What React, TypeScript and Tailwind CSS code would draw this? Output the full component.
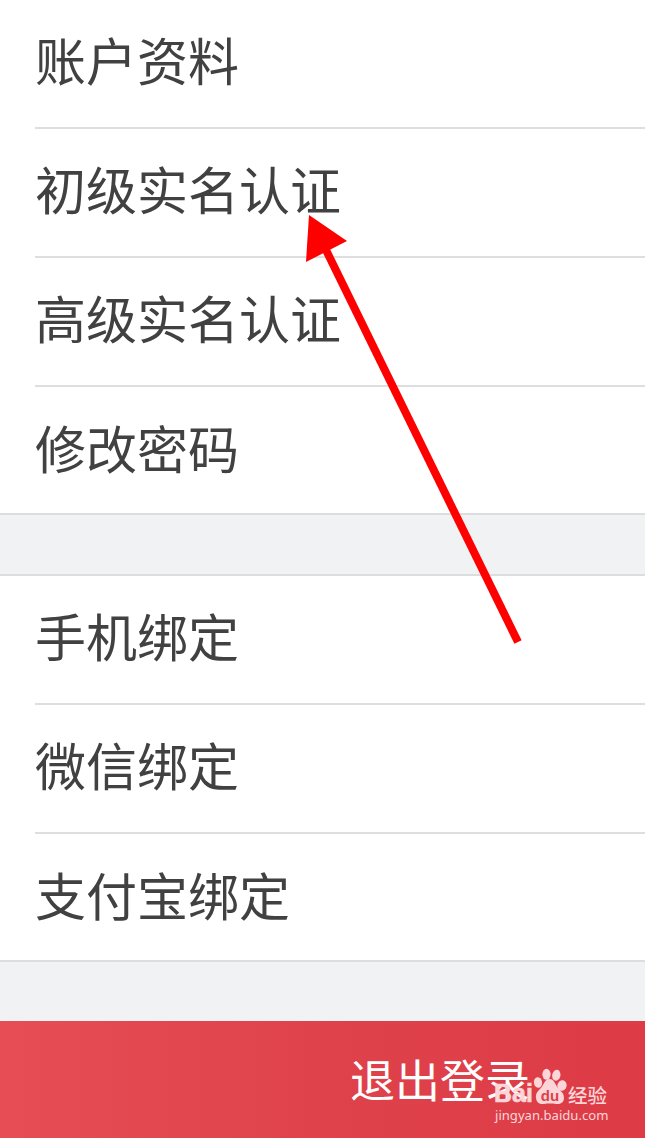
const accountItems = ["账户资料", "初级实名认证", "高级实名认证", "修改密码"];
const bindingItems = ["手机绑定", "微信绑定", "支付宝绑定"];

function MenuGroup({ items }: { items: string[] }) {
  return (
    <ul className="flex flex-col bg-white pl-[35px] border-b-2 border-[#dcdddf]">
      {items.map((item, i) => (
        <li
          key={item}
          className={`flex items-center text-[51px] leading-none text-[#414141] ${
            i < items.length - 1 ? "h-[129px] pb-2 border-b-2 border-[#dedede]" : "h-[126px] pb-[6px]"
          }`}
        >
          {item}
        </li>
      ))}
    </ul>
  );
}

// Red pointer drawn over the list
function Arrow() {
  return (
    <svg className="absolute inset-0 pointer-events-none" width="645" height="1138" viewBox="0 0 645 1138">
      <path d="M326 250L518 642" stroke="#fe0000" strokeWidth="8" />
      <path d="M309 215L347 241L306 262Z" fill="#fe0000" />
    </svg>
  );
}

function Paw() {
  return (
    <svg width="34" height="38" viewBox="0 0 34 38" fill="currentColor">
      <ellipse cx="5" cy="15.5" rx="4.1" ry="5.3" transform="rotate(-10 5 15.5)" />
      <ellipse cx="13.5" cy="7.3" rx="4.1" ry="5.5" />
      <ellipse cx="23.3" cy="8.2" rx="4.1" ry="5.5" transform="rotate(14 23.3 8.2)" />
      <ellipse cx="29" cy="18.5" rx="4.6" ry="5.3" transform="rotate(12 29 18.5)" />
      <path d="M16.5 12C12 12 11 17 8 21C5 24 2.5 26 3 31C3.5 36 7 37.5 11 37C15 36.4 19 36.4 23 37C28 37.5 31 35 31 31C31 26 28 24.500 25 21C22 17 21 12 16.500 12Z" />
      <text
        x="17"
        y="34"
        textAnchor="middle"
        fill="#df3f49"
        fontFamily="Liberation Sans, sans-serif"
        fontSize="15"
        fontWeight="bold"
      >
        du
      </text>
    </svg>
  );
}

function Watermark() {
  return (
    <div className="absolute right-9 bottom-[13px] flex flex-col w-[115px] text-[#fbd5d8]">
      <div className="flex items-end h-[38px]">
        <span className="w-[39px] font-['Liberation_Sans',sans-serif] text-[25px] leading-[23px] font-bold [-webkit-text-stroke:0.6px]">
          Bai
        </span>
        <Paw />
        <span className="pl-px text-[19.500px] leading-5 font-medium whitespace-nowrap">经验</span>
      </div>
      <div className="pl-px font-['Noto_Sans',sans-serif] text-[13.1px] leading-[20px] whitespace-nowrap">
        jingyan.baidu.com
      </div>
    </div>
  );
}

function App() {
  return (
    <div className="relative flex flex-col w-[645px] h-[1138px] overflow-hidden bg-[#f0f2f4] font-['Noto_Sans_CJK_SC',sans-serif]">
      <div className="flex flex-col gap-[59px]">
        <MenuGroup items={accountItems} />
        <div className="border-t-2 border-[#dcdddf]">
          <MenuGroup items={bindingItems} />
        </div>
      </div>
      <button className="mt-auto flex items-center w-full h-[117px] pl-[350px] pb-[2px] text-[45px] leading-none text-white bg-linear-to-r from-[#e64d55] via-[#df424b] to-[#dd3b46]">
        退出登录
      </button>
      <Arrow />
      <Watermark />
    </div>
  );
}

export default App;
